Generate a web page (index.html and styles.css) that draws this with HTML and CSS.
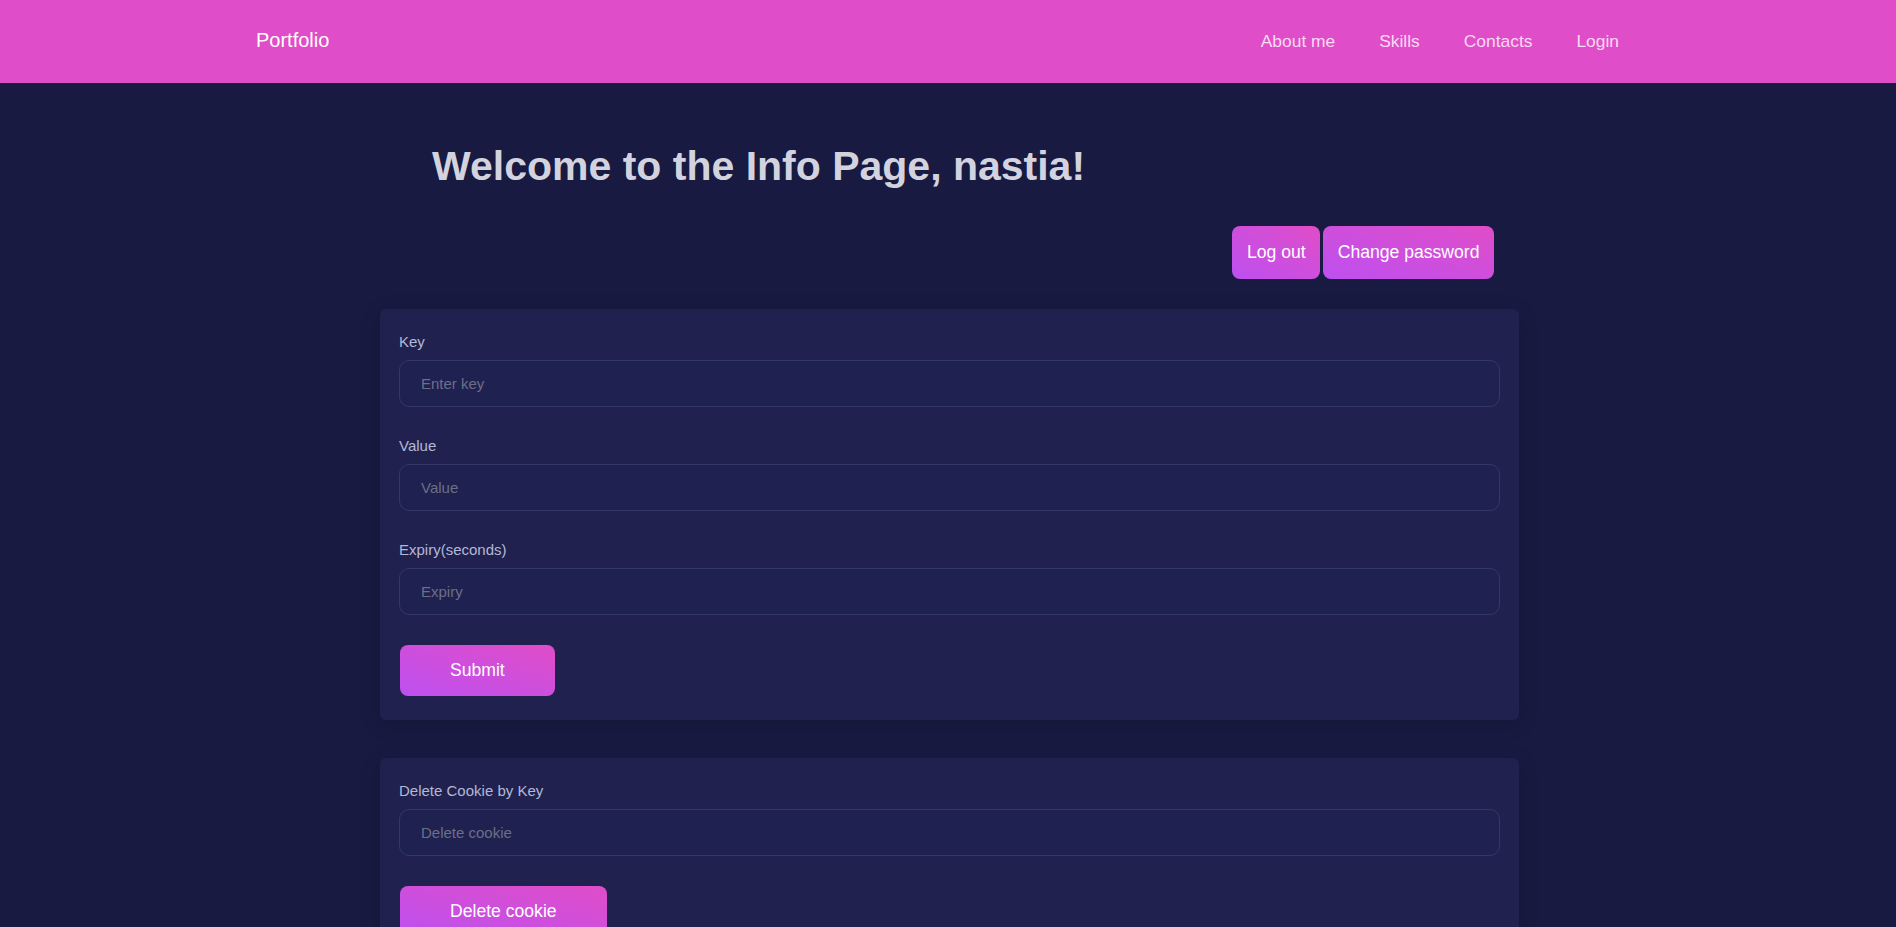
FILE: index.html
```html
<!DOCTYPE html>
<html lang="en">
<head>
<meta charset="utf-8">
<title>Info Page</title>
<link rel="stylesheet" href="styles.css">
</head>
<body>
<header class="navbar">
  <div class="nav-inner">
    <a class="brand" href="#">Portfolio</a>
    <nav class="nav-links">
      <a href="#">About me</a>
      <a href="#">Skills</a>
      <a href="#">Contacts</a>
      <a href="#">Login</a>
    </nav>
  </div>
</header>
<main class="page">
  <section class="welcome">
    <h1 class="title">Welcome to the Info Page, nastia!</h1>
    <div class="actions">
      <button class="btn btn-sm">Log out</button>
      <button class="btn btn-sm">Change password</button>
    </div>
  </section>
  <form class="card">
    <div class="field">
      <label class="label">Key</label>
      <input class="input" type="text" placeholder="Enter key">
    </div>
    <div class="field">
      <label class="label">Value</label>
      <input class="input" type="text" placeholder="Value">
    </div>
    <div class="field">
      <label class="label">Expiry(seconds)</label>
      <input class="input" type="text" placeholder="Expiry">
    </div>
    <button class="btn btn-wide" type="button">Submit</button>
  </form>
  <form class="card">
    <div class="field">
      <label class="label">Delete Cookie by Key</label>
      <input class="input" type="text" placeholder="Delete cookie">
    </div>
    <button class="btn btn-wide" type="button">Delete cookie</button>
  </form>
</main>
</body>
</html>
```
FILE: styles.css
```css
* { box-sizing: border-box; }
html, body {
  margin: 0;
  padding: 0;
  background: #181a42;
  font-family: "Liberation Sans", Arial, sans-serif;
}
.navbar {
  background: #e04dc8;
  height: 83px;
}
.nav-inner {
  width: 1386px;
  margin: 0 auto;
  height: 100%;
  display: flex;
  align-items: center;
  justify-content: space-between;
}
.brand {
  color: #ffffff;
  font-size: 20px;
  text-decoration: none;
  margin-top: -2px;
  margin-left: 1px;
}
.nav-links { display: flex; }
.nav-links a {
  color: #f9dbf4;
  font-size: 17.4px;
  text-decoration: none;
  padding: 0 22px;
}
.page {
  width: 1139px;
  margin-left: calc(50% - 568px);
  padding-bottom: 40px;
}
.welcome {
  padding: 60px 25px 0 52px;
}
.title {
  margin: 0;
  font-size: 41px;
  line-height: 47px;
  font-weight: bold;
  color: #d2d3de;
}
.actions {
  margin-top: 36px;
  display: flex;
  justify-content: flex-end;
  gap: 3px;
}
.btn {
  border: none;
  border-radius: 8px;
  color: #ffffff;
  font-family: "Liberation Sans", Arial, sans-serif;
  font-size: 17.6px;
  line-height: 21px;
  background: linear-gradient(to top right, #bd50f0, #e04dc8);
  cursor: pointer;
}
.btn-sm { padding: 16px 14.5px; }
.btn-wide { padding: 15px 50px; margin-left: 1px; }
.card {
  margin-top: 30px;
  background: #20214f;
  border-radius: 6px;
  padding: 24px 19px;
  box-shadow: 0 4px 20px rgba(0, 0, 0, 0.18);
}
.card + .card { margin-top: 38px; }
.field { margin-bottom: 30px; }
.label {
  display: block;
  color: #b3b8d6;
  font-size: 15px;
  line-height: 17px;
  margin-bottom: 10px;
}
.input {
  display: block;
  width: 100%;
  height: 47px;
  padding: 0 21px;
  background: #1f2150;
  border: 1px solid #323962;
  border-radius: 10px;
  color: #d0d0dc;
  font-family: "Liberation Sans", Arial, sans-serif;
  font-size: 15px;
  outline: none;
}
.input::placeholder { color: #6c6f86; }
```
